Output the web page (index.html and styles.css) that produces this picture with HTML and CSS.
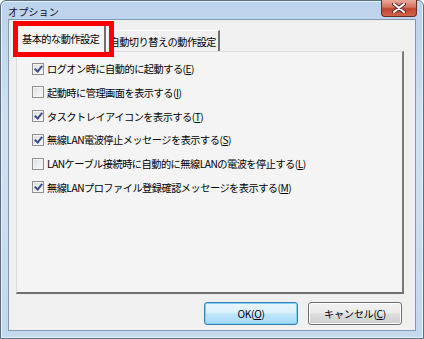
FILE: index.html
```html
<!DOCTYPE html>
<html lang="ja">
<head>
  <meta charset="UTF-8" />
  <title>オプション</title>
  <link rel="stylesheet" href="styles.css">
</head>
<body>
  <div class="window">
    <div class="title-bar">
      <span class="title">オプション</span>
      <div class="close-btn">
        <svg width="14" height="10" viewBox="0 0 14 10">
          <path d="M2 1 L12 9 M12 1 L2 9" stroke="#5a2a24" stroke-width="4" stroke-linecap="round" />
          <path d="M2 1 L12 9 M12 1 L2 9" stroke="#ffffff" stroke-width="2" stroke-linecap="round" />
        </svg>
      </div>
    </div>

    <div class="client">
      <div class="tabs">
        <div class="tab active">基本的な動作設定</div>
        <div class="tab">自動切り替えの動作設定</div>
      </div>

      <div class="panel">
        <label class="row"><span class="check on"></span>ログオン時に自動的に起動する(<u>E</u>)</label>
        <label class="row"><span class="check"></span>起動時に管理画面を表示する(<u>I</u>)</label>
        <label class="row"><span class="check on"></span>タスクトレイアイコンを表示する(<u>T</u>)</label>
        <label class="row"><span class="check on"></span>無線LAN電波停止メッセージを表示する(<u>S</u>)</label>
        <label class="row"><span class="check"></span>LANケーブル接続時に自動的に無線LANの電波を停止する(<u>L</u>)</label>
        <label class="row"><span class="check on"></span>無線LANプロファイル登録確認メッセージを表示する(<u>M</u>)</label>
      </div>

      <div class="buttons">
        <button class="btn default">OK(<u>O</u>)</button>
        <button class="btn">キャンセル(<u>C</u>)</button>
      </div>

      <div class="highlight"></div>
    </div>
  </div>
</body>
</html>
```

FILE: styles.css
```css
* {
  margin: 0;
  padding: 0;
  box-sizing: border-box;
}
body {
  font-family: "Noto Sans CJK JP", "Noto Sans", sans-serif;
  font-size: 10.2px;
  letter-spacing: -0.5px;
  color: #000;
  background: #fff;
}
.window {
  width: 424px;
  height: 339px;
  background: linear-gradient(180deg, #bcd3ec 0%, #d3e2f3 40%, #c4d8ee 100%);
  border: 1px solid #5b6f86;
  border-radius: 6px 6px 0 0;
  box-shadow: inset 0 0 0 1px #e8f0fa;
  position: relative;
  display: flex;
  flex-direction: column;
}
.title-bar {
  height: 22px;
  display: flex;
  align-items: center;
  padding-left: 7px;
}
.title {
  font-size: 10.2px;
  letter-spacing: 0;
  color: #111;
  padding-top: 2px;
}
.close-btn {
  position: absolute;
  top: -1px;
  right: 6px;
  width: 36px;
  height: 17px;
  border: 1px solid #6a2c25;
  border-top: none;
  border-radius: 0 0 4px 4px;
  background: linear-gradient(180deg, #e9a99c 0%, #d4705c 45%, #c0432d 55%, #d0654d 100%);
  display: flex;
  justify-content: center;
  align-items: center;
}
.client {
  flex: 1;
  margin: 0 7px 7px 7px;
  background: #f0f0f0;
  border: 1px solid #8299b3;
  padding: 0 11px 5px 7px;
  display: flex;
  flex-direction: column;
  position: relative;
}
.tabs {
  display: flex;
  align-items: flex-end;
  height: 31px;
  padding-left: 1px;
}
.tab {
  height: 22px;
  padding: 0 2px 0 3px;
  display: flex;
  align-items: center;
  background: #f0f0f0;
  border-top: 1px solid #ffffff;
  border-left: 1px solid #ffffff;
  border-right: 2px solid #6f6f6f;
  margin-bottom: -1px;
}
.tab.active {
  height: 27px;
  padding: 0 4px 1px 4px;
  background: #f5f5f5;
  border-top: 1px solid #d9d9d9;
  border-left: 1px solid #d9d9d9;
  position: relative;
  z-index: 1;
}
.panel {
  height: 243px;
  background: #f4f4f4;
  border-top: 1px solid #dcdcdc;
  border-left: 1px solid #dcdcdc;
  border-right: 2px solid #7a7a7a;
  border-bottom: 2px solid #6f6f6f;
  padding: 10px 0 0 15px;
  display: flex;
  flex-direction: column;
  gap: 10.8px;
}
.row {
  display: flex;
  align-items: center;
  height: 13px;
  flex-shrink: 0;
  white-space: nowrap;
}
.check {
  width: 12px;
  height: 12px;
  margin-right: 3px;
  border: 1px solid #8e8f8f;
  background: linear-gradient(135deg, #dcdcdc, #fbfbfb);
  box-shadow: inset 0 0 0 1px #f4f4f4;
  position: relative;
}
.check.on::after {
  content: "";
  position: absolute;
  left: 3px;
  top: 0px;
  width: 3px;
  height: 6px;
  border-right: 2px solid #3b4f8e;
  border-bottom: 2px solid #3b4f8e;
  transform: rotate(40deg);
}
.buttons {
  display: flex;
  justify-content: flex-end;
  gap: 10px;
  margin-top: 8px;
  padding-right: 2px;
}
.btn {
  width: 94px;
  height: 23px;
  font-family: inherit;
  font-size: 10.2px;
  letter-spacing: -0.3px;
  color: #000;
  border: 1px solid #707070;
  border-radius: 3px;
  background: linear-gradient(180deg, #f2f2f2 0%, #ebebeb 48%, #dddddd 52%, #cfcfcf 100%);
  box-shadow: inset 0 0 0 1px #fcfcfc;
}
.btn.default {
  border-color: #3c7fb1;
  background: linear-gradient(180deg, #eaf6fd 0%, #d9f0fc 48%, #bee6fd 52%, #a7d9f5 100%);
  box-shadow: inset 0 0 0 1px #7ad0f5;
}
.highlight {
  position: absolute;
  left: 4px;
  top: 1px;
  width: 101px;
  height: 36px;
  border: 5px solid #ff0000;
  z-index: 2;
}
```
